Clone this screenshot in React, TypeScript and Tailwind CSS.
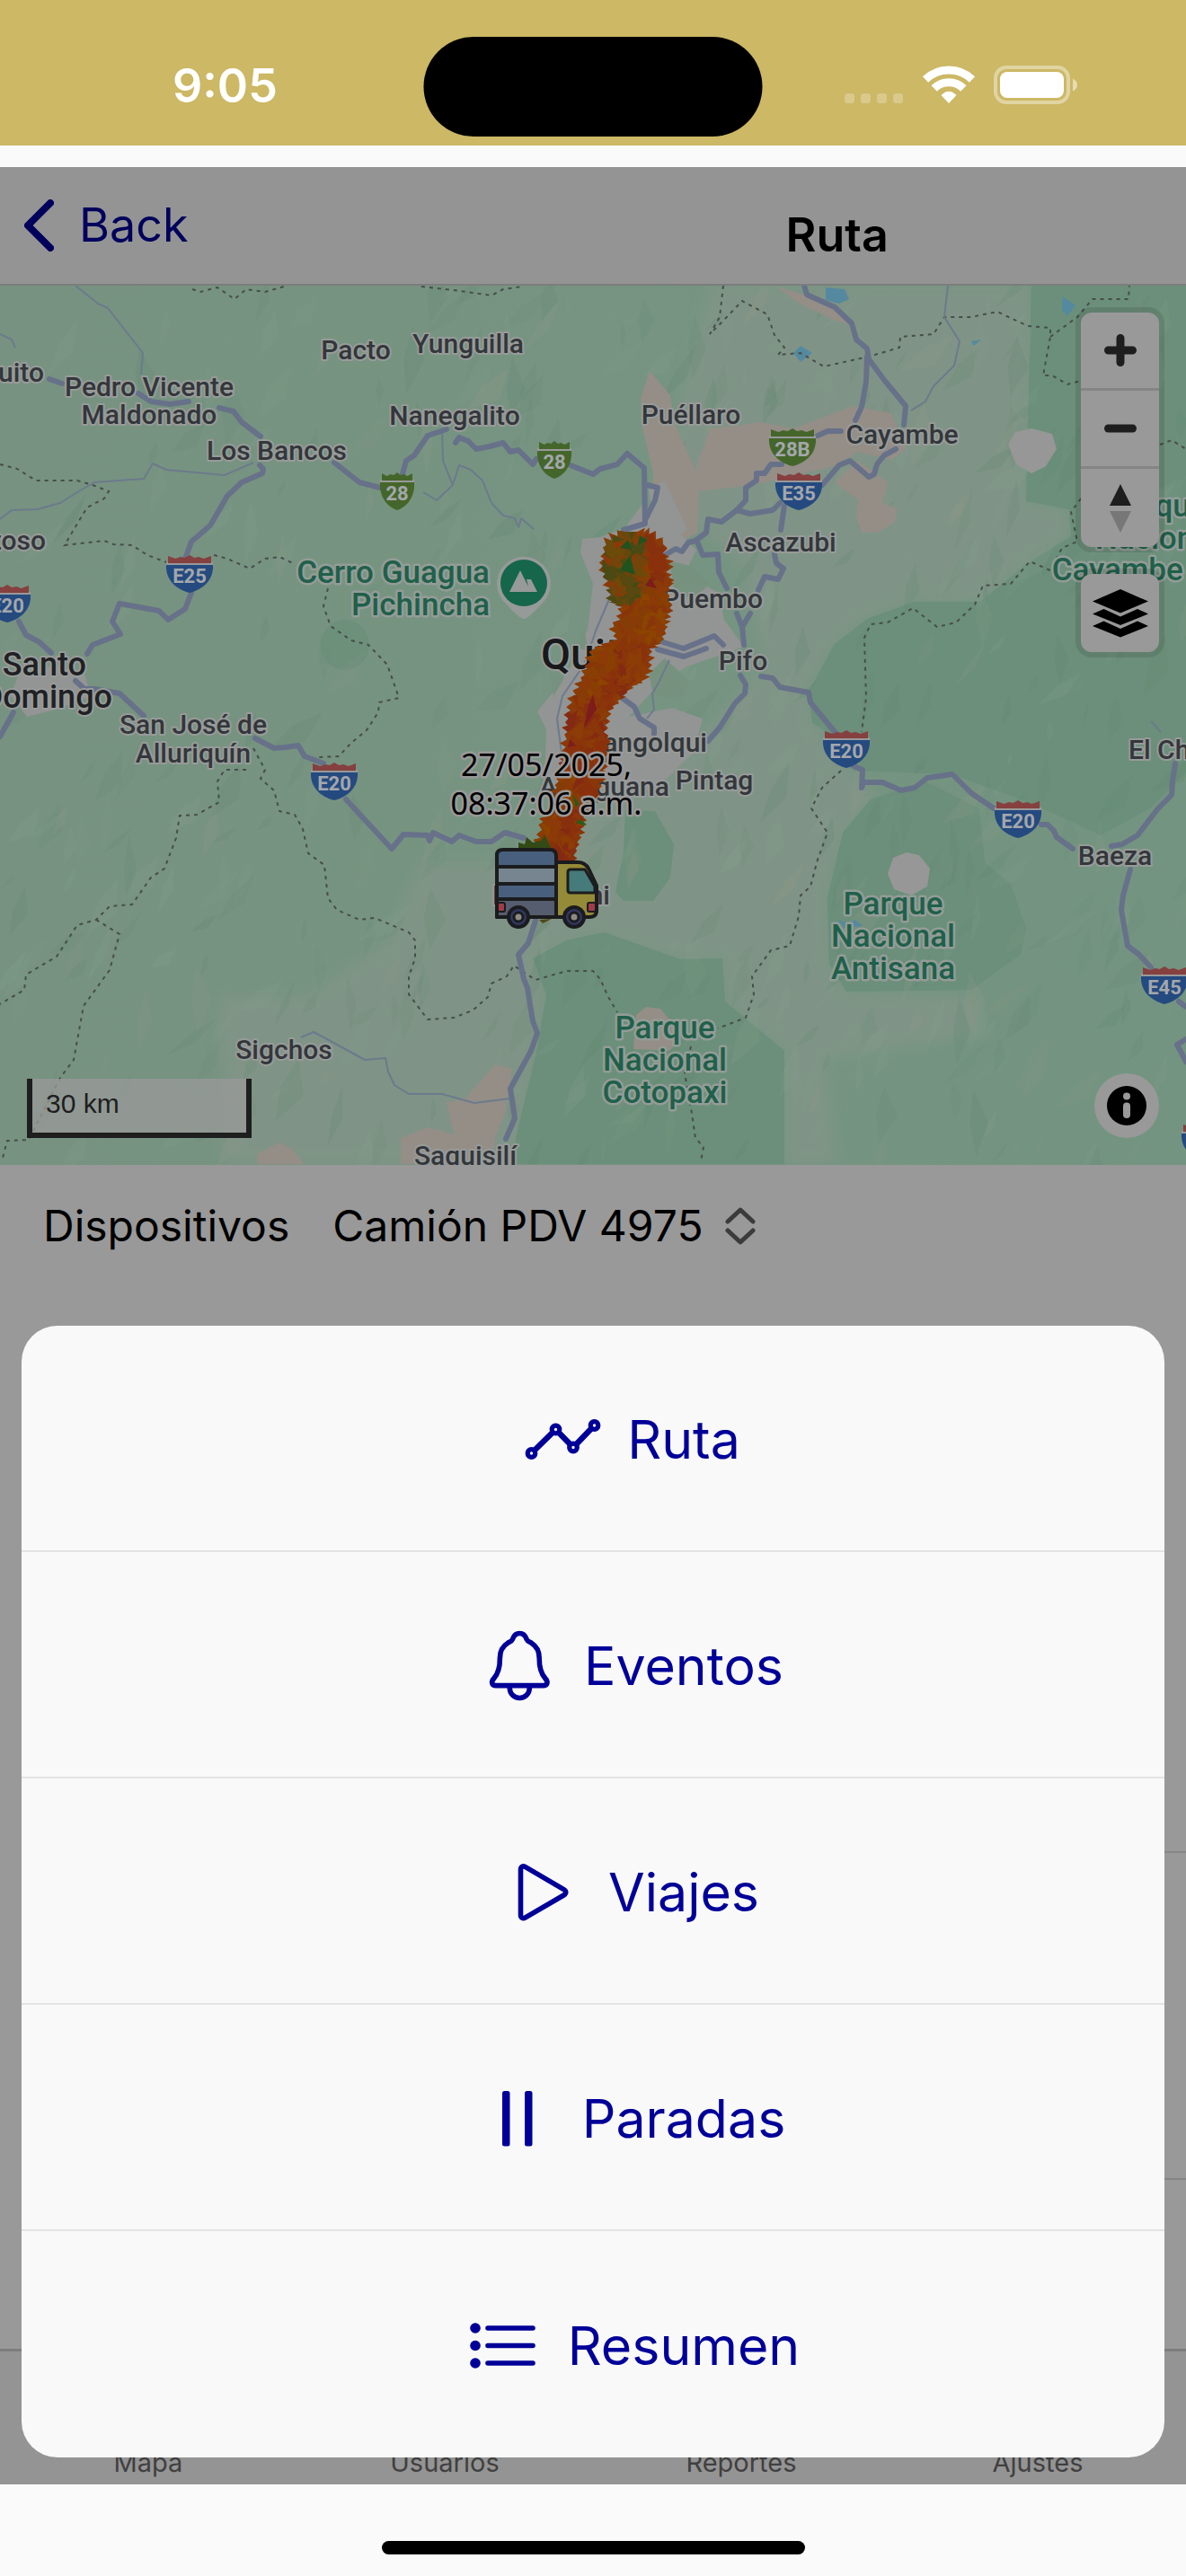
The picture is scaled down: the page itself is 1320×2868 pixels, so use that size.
import React from "react";

type Pt = [number, number];

/* Small deterministic generator, used for the relief facets and the jagged route. */
function makeRandom(seed: number) {
  let s = seed;
  return () => {
    s = (s * 1664525 + 1013904223) % 4294967296;
    return s / 4294967296;
  };
}

const MAJOR_ROADS = [
  "55,422 69,427",
  "154,438 168,447 189,450 210,447",
  "244,454 260,458 269,470 290,486",
  "372,515 400,537 423,543",
  "448,528 452,513 461,507 476,485 497,478",
  "507,493 511,487 521,491 530,500 545,497 560,493 568,503 577,501 593,517 597,511",
  "635,518 660,528 668,522 687,517 698,505 717,521 718,583 694,590",
  "721,540 732,543 729,557 719,577",
  "289,518 293,522 292,527 269,537 253,552 234,585 213,603 205,625",
  "213,660 206,678 187,690 177,680 133,672 125,692 134,706 103,718 97,728",
  "21,692 29,707 44,715 57,727",
  "84,758 94,767 105,767 133,772 160,797",
  "15,793 0,820",
  "284,822 305,833 318,832 332,830 339,842 350,846 360,850",
  "385,890 436,945 449,929 476,930 478,936 482,927 503,937 511,930 530,937 547,937 562,927 583,933",
  "596,1025 588,1050 577,1063 583,1090 587,1100 593,1137 598,1150 591,1170 568,1212 573,1245 563,1268",
  "895,318 898,328 929,342 948,360 953,378 965,388 967,400 984,423 1008,452 1006,473",
  "965,397 964,425 959,453 952,468",
  "910,485 921,480 936,480",
  "870,517 858,517 851,527 842,527 842,535 830,543 830,557 820,568 803,581 788,578 786,593 774,602 766,604 759,614 752,611 740,618",
  "820,568 835,572 860,568 868,560",
  "915,540 934,518 946,513 967,531 973,528 976,517 984,507 997,500",
  "873,563 869,590",
  "862,617 864,627 872,633 866,645 851,642 844,657",
  "776,603 782,618 799,617 800,637 809,655",
  "820,683 826,698 835,683",
  "826,698 828,718",
  "738,715 761,722 795,708 805,718",
  "732,723 761,731 786,722",
  "824,752 830,762 829,772 818,783 801,810 788,825",
  "847,753 860,755 868,765 900,771 902,782 925,810 931,817",
  "687,773 706,787 712,800 728,810 728,817",
  "950,853 960,857 959,877 961,871 982,871 1003,880 1018,877 1032,866 1060,862 1081,883 1106,900",
  "1159,918 1166,918 1173,925 1176,932 1194,945",
  "1237,942 1249,940 1266,930 1289,900 1304,885 1305,870 1308,850",
  "1258,968 1250,997 1248,1013 1255,1053 1268,1063 1281,1077",
  "1312,1115 1320,1121",
  "1320,1157 1310,1163 1320,1182",
];

const MINOR_ROADS = [
  "84,318 109,338 120,343 159,393 157,417",
  "0,372 13,378 17,387",
  "0,578 13,568 42,567 67,560 86,548 105,537 160,533 170,516 185,523 250,529 282,515",
  "492,480 493,513 504,540 486,557 471,548",
  "504,540 511,518 524,523 537,535 547,560 560,574 573,577 577,587 580,577 594,589",
  "1055,318 1051,353 1068,380 1062,407 1039,430 1030,447 1014,457",
  "335,1155 349,1149 364,1157 406,1180 429,1178 432,1193 439,1208 455,1218 492,1218 528,1228 568,1223",
  "681,660 664,700 650,740 626,775 620,800 625,838",
  "745,735 733,760 726,772 728,790 720,800",
  "1281,803 1292,815",
];

const BORDERS = [
  "214,322 223,325 242,320 261,333 274,322 295,325 316,319",
  "469,319 505,323 547,329 560,322 581,319",
  "0,517 19,522 40,535 86,535 103,540 121,547 116,555 97,565 86,583 76,600 72,607 116,602 126,606 147,607 164,618 185,626",
  "238,618 253,622 278,633 295,622 311,620 326,627",
  "365,655 360,675 368,697 391,713 410,718 431,740 444,777 422,782 421,793 408,813 391,827 377,842 354,843",
  "282,833 295,857 290,867 305,880 311,903 328,907 337,923 343,950 361,963 365,1000 375,1013 400,1024 417,1022 455,1038 462,1047 462,1067 455,1087 455,1107 476,1135 505,1133 526,1125 543,1110 547,1095 564,1087 572,1075 596,1091 631,1081 660,1081 668,1090 677,1110 687,1127",
  "274,857 250,857 242,870 244,893 219,907 200,908 196,933 183,967 168,977 147,1007 122,1009 107,1024 86,1030 63,1065 29,1085 27,1102 0,1118",
  "107,1024 133,1040 122,1080 93,1120 82,1180 67,1200 38,1257 32,1269 8,1270 2,1293",
  "805,318 801,353 790,372 805,357 826,335 854,350 862,373 873,387 866,395 891,393 917,408 967,397 1001,387 1002,375 1039,372 1051,353 1081,353 1110,347 1144,363 1169,365 1169,375 1161,418 1171,418 1188,428 1203,424",
  "1169,375 1199,353 1216,333 1256,333 1257,318",
  "1203,555 1192,570 1199,603 1182,610 1169,635 1146,625 1125,650 1094,652 1085,673 1064,693 1043,698 1016,677 988,693 969,695 962,710 964,777 959,815",
  "936,858 915,877 903,900 921,927 910,957 902,987 891,997 889,1020 879,1053 858,1058 837,1087 839,1107 830,1133 799,1145",
  "769,1165 762,1195 769,1233 774,1267 783,1277 780,1293",
  "1291,495 1304,490 1320,500",
];

const FORESTS = [
  "1148,318 1320,318 1320,860 1280,900 1225,930 1150,895 1060,862 950,858 929,820 904,805 900,770 929,717 967,688 1018,670 1091,670 1144,627 1192,597 1190,567 1142,558",
  "969,890 938,927 921,1000 923,1073 942,1104 1081,1102 1136,1063 1142,1033 1125,985 1096,960 1090,900 1030,870",
  "574,1296 574,1267 598,1167 608,1107 593,1067 630,1047 673,1038 757,1068 804,1067 807,1115 873,1170 873,1296",
  "696,902 729,903 750,940 746,977 727,1003 694,1003 685,993 694,947",
];

const LIGHT_LAND = [
  "790,318 1148,318 1142,558 1190,567 1192,597 1144,627 1091,670 1018,670 967,688 929,717 900,770 904,805 940,850 980,890 940,930 920,1000 923,1073 942,1104 1080,1110 1100,1150 920,1180 930,1296 873,1296 873,1170 807,1115 804,1067 757,1068 660,1040 600,1067 608,1107 574,1296 250,1296 245,1110 340,1110 430,1050 470,960 590,960 680,870 760,840 850,740 820,620 730,560 760,430",
];

const FARMLAND = [
  "723,413 746,440 750,470 774,523 790,477 828,473 845,470 883,477 950,452 992,460 1009,500 992,512 955,503 925,520 880,530 840,540 778,547 776,593 744,612 725,575 727,527 715,477 713,443",
  "929,537 955,513 988,537 982,560 999,567 995,582 976,593 959,593 953,575 955,557",
  "551,1185 570,1190 562,1240 551,1267 548,1296 509,1296 446,1296 446,1267 476,1255 505,1263 497,1227 518,1223",
  "311,1272 325,1279 339,1296 286,1296 286,1285",
  "862,318 900,330 940,350 948,362 930,357 890,338",
  "708,1130 719,1121 735,1123 745,1135 755,1160 745,1170 705,1168",
];

const URBAN = [
  "648,600 668,598 695,588 716,560 736,575 775,612 762,640 800,660 806,690 828,720 800,730 765,742 735,760 700,798 748,788 782,800 772,838 728,880 684,880 610,878 606,870 608,812 598,792 620,765 640,735 654,700 660,650 646,615",
  "20,752 60,740 95,752 100,775 62,790 30,798 12,775",
  "722,545 740,535 765,590 750,600 728,585",
];

const PATCHES = [
  "740,733 767,758 757,780 727,773 722,750",
  "745,625 770,630 790,650 770,668 750,655",
  "612,750 628,755 616,775",
  "640,720 650,700 655,725",
];

const SNOW = [
  "1148,477 1171,483 1176,500 1164,519 1148,527 1131,517 1122,495 1130,481",
  "1009,949 1023,952 1035,967 1032,987 1014,997 995,990 988,973 994,955",
];

const WATER = [
  "919,320 940,322 945,333 934,338 919,334",
  "891,385 904,393 891,403 883,393",
  "1182,330 1197,340 1188,352 1182,345",
  "1081,380 1092,378 1084,385",
  "932,1024 945,1028 952,1024 960,1031 940,1033",
];

type Label = { x: number; y: number; text: string; anchor?: "start" | "middle" | "end" };

const TOWNS: Label[] = [
  { x: 396, y: 400, text: "Pacto" },
  { x: 521, y: 393, text: "Yunguilla" },
  { x: 49, y: 425, text: "Quito", anchor: "end" },
  { x: 166, y: 441, text: "Pedro Vicente" },
  { x: 166, y: 472, text: "Maldonado" },
  { x: 308, y: 512, text: "Los Bancos" },
  { x: 506, y: 473, text: "Nanegalito" },
  { x: 51, y: 612, text: "Ventoso", anchor: "end" },
  { x: 215, y: 817, text: "San José de" },
  { x: 215, y: 849, text: "Alluriquín" },
  { x: 316, y: 1179, text: "Sigchos" },
  { x: 518, y: 1297, text: "Saquisilí" },
  { x: 769, y: 472, text: "Puéllaro" },
  { x: 1004, y: 494, text: "Cayambe" },
  { x: 869, y: 614, text: "Ascazubi" },
  { x: 849, y: 677, text: "Puembo", anchor: "end" },
  { x: 827, y: 746, text: "Pifo" },
  { x: 787, y: 837, text: "Sangolqui", anchor: "end" },
  { x: 795, y: 879, text: "Pintag" },
  { x: 745, y: 886, text: "Amaguana", anchor: "end" },
  { x: 679, y: 1007, text: "Machachi", anchor: "end" },
  { x: 1256, y: 845, text: "El Chaco", anchor: "start" },
  { x: 1241, y: 963, text: "Baeza" },
];

const PARKS: Label[] = [
  { x: 545, y: 649, text: "Cerro Guagua", anchor: "end" },
  { x: 545, y: 685, text: "Pichincha", anchor: "end" },
  { x: 994, y: 1018, text: "Parque" },
  { x: 994, y: 1054, text: "Nacional" },
  { x: 994, y: 1090, text: "Antisana" },
  { x: 740, y: 1156, text: "Parque" },
  { x: 740, y: 1192, text: "Nacional" },
  { x: 740, y: 1228, text: "Cotopaxi" },
  { x: 1288, y: 575, text: "Parque" },
  { x: 1288, y: 611, text: "Nacional" },
  { x: 1288, y: 646, text: "Cayambe Coca" },
];

const SHIELDS: { x: number; y: number; text: string; kind: "green" | "blue" }[] = [
  { x: 442, y: 547, text: "28", kind: "green" },
  { x: 617, y: 512, text: "28", kind: "green" },
  { x: 882, y: 498, text: "28B", kind: "green" },
  { x: 211, y: 639, text: "E25", kind: "blue" },
  { x: 8, y: 672, text: "E20", kind: "blue" },
  { x: 889, y: 547, text: "E35", kind: "blue" },
  { x: 372, y: 870, text: "E20", kind: "blue" },
  { x: 942, y: 834, text: "E20", kind: "blue" },
  { x: 1133, y: 912, text: "E20", kind: "blue" },
  { x: 1296, y: 1097, text: "E45", kind: "blue" },
  { x: 1341, y: 1272, text: "", kind: "blue" },
];

const LEFT_EDGE: Pt[] = [
  [694, 592], [675, 607], [671, 630], [680, 655], [682, 670], [694, 676], [691, 690], [684, 698],
  [688, 712], [662, 722], [654, 745], [645, 765], [637, 782], [633, 800], [632, 815], [629, 840],
  [622, 870], [615, 900], [605, 915], [602, 933], [590, 960],
];
const RIGHT_EDGE: Pt[] = [
  [710, 592], [722, 595], [738, 606], [737, 616], [744, 628], [741, 637], [747, 648], [741, 660],
  [745, 677], [739, 690], [739, 702], [734, 715], [722, 722], [721, 745], [714, 758], [703, 764],
  [687, 780], [676, 792], [671, 815], [676, 822], [672, 850], [665, 880], [662, 890], [648, 910],
  [644, 930], [636, 960],
];

/* Adds saw teeth along an edge, pointing in the given direction. */
function teeth(edge: Pt[], side: number, rnd: () => number): Pt[] {
  const out: Pt[] = [];
  for (let i = 0; i < edge.length - 1; i++) {
    const [ax, ay] = edge[i];
    const [bx, by] = edge[i + 1];
    const n = Math.max(1, Math.round(Math.hypot(bx - ax, by - ay) / 8));
    for (let k = 0; k < n; k++) {
      const t = k / n;
      const u = (k + 0.5) / n;
      const lift = by < 612 ? 7 : 2;
      out.push([ax + (bx - ax) * t, ay + (by - ay) * t]);
      out.push([ax + (bx - ax) * u + side * (3 + rnd() * 5), ay + (by - ay) * u - lift + rnd() * 3]);
    }
  }
  out.push(edge[edge.length - 1]);
  return out;
}

function edgeX(edge: Pt[], y: number) {
  for (let i = 0; i < edge.length - 1; i++) {
    const [ax, ay] = edge[i];
    const [bx, by] = edge[i + 1];
    if (y >= ay && y <= by && by > ay) return ax + ((bx - ax) * (y - ay)) / (by - ay);
  }
  return edge[edge.length - 1][0];
}

const toPoints = (pts: Pt[]) => pts.map((p) => `${p[0].toFixed(1)},${p[1].toFixed(1)}`).join(" ");

const routeRandom = makeRandom(41);
const ROUTE_OUTLINE = toPoints([
  ...teeth(LEFT_EDGE, -1, routeRandom),
  ...teeth(RIGHT_EDGE, 1, routeRandom).reverse(),
]);

const GREENS = ["#57490f", "#4c4a14", "#65480d", "#74450a", "#404d15", "#6b4a0a"];
const ORANGES = ["#8a3f02", "#853c06", "#8b3a08", "#88350b", "#8c4400"];
const REDS = ["#8a310c", "#87300d", "#8a360a", "#852a12", "#8c3c06"];

const ROUTE_FACETS = Array.from({ length: 430 }, () => {
  const y = 588 + routeRandom() * 370;
  const l = edgeX(LEFT_EDGE, Math.max(y, 593));
  const r = edgeX(RIGHT_EDGE, Math.max(y, 593));
  const f = routeRandom();
  const x = l + (r - l) * f;
  const size = 6 + routeRandom() * 9;
  const a = routeRandom() * 6.28;
  let palette = ORANGES;
  if (y < 672 && f < 0.62) palette = GREENS;
  else if (y < 650) palette = f > 0.7 ? REDS : ORANGES;
  else if (y > 770 && y < 860) palette = REDS;
  else if (y > 720 && f > 0.4) palette = REDS;
  const fill = palette[Math.floor(routeRandom() * palette.length)];
  const pts: Pt[] = [0, 2.3, 3.6].map((d) => [x + Math.cos(a + d) * size, y + Math.sin(a + d) * size]);
  return { fill, points: toPoints(pts) };
});

const reliefRandom = makeRandom(7);
const RELIEF = Array.from({ length: 620 }, () => {
  const x = reliefRandom() * 1320;
  const y = 318 + reliefRandom() * 978;
  const keep = x > 850 || y > 850 || x > 480 || reliefRandom() > 0.75;
  const size = keep ? 12 + reliefRandom() * 26 : 0;
  const a = -1.1 + (reliefRandom() - 0.5) * 1.1;
  const w = size * (0.2 + reliefRandom() * 0.35);
  const c = Math.cos(a);
  const s = Math.sin(a);
  const pts: Pt[] = [
    [x + c * size, y + s * size],
    [x - s * w, y + c * w],
    [x - c * size, y - s * size],
    [x + s * w * 0.4, y - c * w * 0.4],
  ];
  const tone = reliefRandom();
  return {
    points: toPoints(pts),
    fill: tone < 0.5 ? "#5f8570" : tone < 0.85 ? "#86a08e" : "#93998a",
    opacity: 0.1 + reliefRandom() * 0.14,
  };
});

function Shield({ x, y, text, kind }: (typeof SHIELDS)[number]) {
  const w = kind === "blue" || text.length > 2 ? 26 : 19;
  const body = `M${-w},-10 H${w} C${w + 1},6 ${w * 0.6},17 0,21 C${-w * 0.6},17 ${-w - 1},6 ${-w},-10Z`;
  const crown = `M${-w + 2},-12 V-20 L${-w * 0.6},-17 L${-w * 0.4},-19 L${-w * 0.2},-18 L0,-21 L${w * 0.2},-18 L${w * 0.4},-19 L${w * 0.6},-17 L${w - 2},-20 V-12Z`;
  return (
    <g transform={`translate(${x} ${y})`}>
      <path d={`M${-w},-13 H${w} V-9 H${-w}Z`} fill="#999999" />
      <path d={body} fill={kind === "blue" ? "#244a80" : "#45662a"} />
      <path d={crown} fill={kind === "blue" ? "#85403f" : "#45662a"} />
      {text && (
        <text y="10" textAnchor="middle" fontSize="22" fontWeight="700" fill="#a3a7ab">
          {text}
        </text>
      )}
    </g>
  );
}

function Truck() {
  return (
    <g stroke="#1b1c1e" strokeWidth="4" strokeLinejoin="round">
      <path d="M553,1021 V952 Q553,946 560,946 H612 Q619,946 619,953 V1021Z" fill="#48607d" />
      <path d="M553,965 H619 V984 H553Z" fill="#768590" />
      <path d="M553,984 H619 V1001 H553Z" fill="#48607d" />
      <path d="M553,1001 H619 V1021 H553Z" fill="#565d6e" />
      <path d="M619,960 H643 Q651,960 655,967 L664,986 V1014 Q664,1021 656,1021 H619Z" fill="#958a37" />
      <path d="M632,971 Q632,968 635,968 H651 L662,987 V994 H635 Q632,994 632,991Z" fill="#467b7b" strokeWidth="3" />
      <rect x="554" y="1005" width="8" height="10" rx="2" fill="#a03c4a" strokeWidth="2" />
      <rect x="654" y="1005" width="9" height="10" rx="2" fill="#a03c4a" strokeWidth="2" />
      <circle cx="577" cy="1021" r="11" fill="#333763" />
      <circle cx="577" cy="1021" r="5" fill="#8d8a82" strokeWidth="3" />
      <circle cx="639" cy="1021" r="11" fill="#333763" />
      <circle cx="639" cy="1021" r="5" fill="#8d8a82" strokeWidth="3" />
    </g>
  );
}

function MapDrawing() {
  return (
    <svg
      className="block h-[979px] w-full font-[Roboto,sans-serif]"
      viewBox="0 318 1320 979"
      preserveAspectRatio="xMidYMid slice"
      role="img"
      aria-label="Mapa de la ruta"
    >
      <defs>
        <linearGradient id="land" x1="0" x2="1" y1="0" y2="0">
          <stop offset="0" stopColor="#779280" />
          <stop offset="0.5" stopColor="#769481" />
          <stop offset="1" stopColor="#739480" />
        </linearGradient>
        <filter id="soft" x="-5%" y="-5%" width="110%" height="110%">
          <feGaussianBlur stdDeviation="7" />
        </filter>
        <clipPath id="route">
          <polygon points={ROUTE_OUTLINE} />
        </clipPath>
      </defs>
      <rect y="318" width="1320" height="979" fill="url(#land)" />
      <g fill="#7f9486" filter="url(#soft)">
        {LIGHT_LAND.map((p) => <polygon key={p} points={p} />)}
      </g>
      <g fill="#6b8f7a">
        {FORESTS.map((p) => <polygon key={p} points={p} />)}
        <ellipse cx="384" cy="718" rx="27" ry="28" fill="#6d907b" />
      </g>
      <g>
        {RELIEF.map((r, i) => <polygon key={i} points={r.points} fill={r.fill} opacity={r.opacity} />)}
      </g>
      <g fill="#948e87">
        {FARMLAND.map((p) => <polygon key={p} points={p} />)}
      </g>
      <g fill="#939494">
        {URBAN.map((p) => <polygon key={p} points={p} />)}
      </g>
      <g fill="#77917f">
        {PATCHES.map((p) => <polygon key={p} points={p} />)}
      </g>
      <g fill="#979797">
        {SNOW.map((p) => <polygon key={p} points={p} />)}
      </g>
      <g fill="#5489a0">
        {WATER.map((p) => <polygon key={p} points={p} />)}
      </g>
      <g fill="none" stroke="#474e4b" strokeWidth="2" strokeDasharray="4 5">
        {BORDERS.map((p) => <polyline key={p} points={p} />)}
      </g>
      <g fill="none" stroke="#6c7a8c" strokeWidth="2" strokeLinejoin="round">
        {MINOR_ROADS.map((p) => <polyline key={p} points={p} />)}
      </g>
      <g fill="none" stroke="#677189" strokeWidth="6" strokeLinejoin="round" strokeLinecap="round">
        {MAJOR_ROADS.map((p) => <polyline key={p} points={p} />)}
      </g>
      <g>
        {SHIELDS.map((s, i) => <Shield key={i} {...s} />)}
      </g>
      <g fontSize="30" fontWeight="500" fill="#33373a" stroke="#989b9a" strokeWidth="4" strokeLinejoin="round" style={{ paintOrder: "stroke" }}>
        {TOWNS.map((t) => (
          <text key={t.text + t.x} x={t.x} y={t.y} textAnchor={t.anchor ?? "middle"}>
            {t.text}
          </text>
        ))}
        <text x="96" y="752" textAnchor="end" fontSize="36" fill="#1f2123">Santo</text>
        <text x="125" y="788" textAnchor="end" fontSize="36" fill="#1f2123">Domingo</text>
        <text x="602" y="745" fontSize="48" fill="#18191b">Quito</text>
      </g>
      <g fontSize="35" fontWeight="500" fill="#1f604a" stroke="#939c97" strokeWidth="5" strokeLinejoin="round" style={{ paintOrder: "stroke" }}>
        {PARKS.map((t, i) => (
          <text key={i} x={t.x} y={t.y} textAnchor={t.anchor ?? "middle"}>
            {t.text}
          </text>
        ))}
      </g>
      <path d="M583,689 Q578,689 564,673 A30,30 0 1 1 602,673 Q588,689 583,689Z" fill="#969a98" />
      <circle cx="583" cy="649" r="26" fill="#15664a" />
      <path d="M567,659 L579,635 L586,649 L588,653 L586,645 L591,645 L598,659Z" fill="#969a98" />
      <polygon points={ROUTE_OUTLINE} fill="#8a3a08" />
      <g clipPath="url(#route)">
        {ROUTE_FACETS.map((f, i) => <polygon key={i} points={f.points} fill={f.fill} />)}
        <path d="M701,619 L707,640 L690,634Z M690,610 L699,601 L703,612Z M712,596 L720,602 L710,606Z" fill="#1f531f" />
        <path d="M660,773 L664,790 L650,810 L655,785Z M724,643 L731,655 L718,652Z M634,823 L641,830 L632,832Z" fill="#7d1c1c" />
      </g>
      <path d="M577,938 L584,940 L586,932 L593,938 L602,936 L606,930 L614,945 L610,950 H577Z" fill="#334a16" />
      <path d="M645,912 L653,918 L650,919 L641,916Z M637,884 L645,895 L641,899Z" fill="#2a5a1a" />
      <path d="M600,1024 L604,1028 L614,1023Z" fill="#4f4a12" />
      <Truck />
      <g
        className="font-['Noto_Sans','Open_Sans',sans-serif]"
        fontSize="34"
        textAnchor="middle"
        fill="#000000"
        stroke="#999999"
        strokeWidth="5"
        strokeLinejoin="round"
        style={{ paintOrder: "stroke" }}
      >
        <text x="608" y="864">27/05/2025,</text>
        <text x="608" y="907">08:37:06 a.m.</text>
      </g>
    </svg>
  );
}

function MapControls() {
  const cell = "flex h-[87px] w-[87px] items-center justify-center";
  return (
    <div className="absolute top-[30px] right-[30px] flex flex-col gap-[30px]">
      <div className="divide-y-3 divide-[#858585] overflow-hidden rounded-xl bg-[#999] outline-6 outline-black/10">
        <button className={cell} aria-label="Acercar">
          <svg width="36" height="36" viewBox="0 0 36 36" stroke="#1e1e1e" strokeWidth="9" strokeLinecap="round">
            <path d="M4.5 18H31.5M18 4.5V31.5" />
          </svg>
        </button>
        <button className={cell} aria-label="Alejar">
          <svg width="36" height="36" viewBox="0 0 36 36" stroke="#1e1e1e" strokeWidth="9" strokeLinecap="round">
            <path d="M4.5 18H31.5" />
          </svg>
        </button>
        <button className={cell} aria-label="Orientar al norte">
          <svg width="24" height="54" viewBox="0 0 24 54">
            <path d="M12 0L24 24H0Z" fill="#1e1e1e" />
            <path d="M12 54L24 30H0Z" fill="#777777" />
          </svg>
        </button>
      </div>
      <button className={`${cell} rounded-xl bg-[#999] outline-6 outline-black/10`} aria-label="Capas">
        <svg width="62" height="54" viewBox="0 0 62 54">
          <path d="M31 0L62 13.5L31 26.5L0 13.5Z" />
          <path d="M12.5 22L31 30.5L50 22L62 27.5L31 40L0 27.5Z" />
          <path d="M12.5 35.5L31 44L50 35.5L62 41L31 53.5L0 41Z" />
        </svg>
      </button>
    </div>
  );
}

function StatusBar() {
  return (
    <header className="relative flex h-[162px] items-center justify-between bg-[#ccb865] pr-[120px] pl-[192px] text-white">
      <span className="pt-[30px] text-[52px] leading-[60px] font-semibold">9:05</span>
      <div className="absolute top-[41px] left-1/2 h-[111px] w-[377px] -translate-x-1/2 rounded-full bg-black" />
      <div className="flex items-center pt-[27px]">
        <svg width="66" height="43" viewBox="0 0 66 43" fill="#ffffff" fillOpacity="0.25">
          <rect x="0" y="31" width="11" height="11" rx="3" />
          <rect x="18" y="31" width="11" height="11" rx="3" />
          <rect x="36" y="31" width="11" height="11" rx="3" />
          <rect x="54" y="31" width="11" height="11" rx="3" />
        </svg>
        <svg className="ml-5" width="60" height="43" viewBox="0 0 60 43" fill="none" stroke="#ffffff" strokeWidth="9">
          <path d="M4 15.5A37.5 37.5 0 0 1 56 15.5" />
          <path d="M13.7 25.5A23 23 0 0 1 46.3 25.5" />
          <path d="M30 42L21.5 33Q30 24.5 38.5 33Z" fill="#ffffff" stroke="none" />
        </svg>
        <svg className="ml-5" width="94" height="43" viewBox="0 0 94 43">
          <rect x="2" y="2" width="81" height="39" rx="12" fill="none" stroke="#ffffff" strokeOpacity="0.4" strokeWidth="4" />
          <rect x="7" y="7" width="71" height="29" rx="8" fill="#ffffff" />
          <path d="M88 14.5Q93 17 93 21.5Q93 26 88 28.5Z" fill="#ffffff" fillOpacity="0.5" />
        </svg>
      </div>
    </header>
  );
}

const ink = { fill: "none", stroke: "currentColor", strokeWidth: 5.6, strokeLinecap: "round" as const, strokeLinejoin: "round" as const };

const ACTIONS: { label: string; icon: React.ReactNode }[] = [
  {
    label: "Ruta",
    icon: (
      <g {...ink}>
        <path d="M7.5 57L34.5 30.5L54 50.5L77.5 26" strokeWidth="6.5" />
        <g fill="#f9f9f9" strokeWidth="5.2">
          <circle cx="7.5" cy="57" r="4.3" />
          <circle cx="34.5" cy="30.5" r="4.3" />
          <circle cx="54" cy="50.5" r="4.3" />
          <circle cx="77.5" cy="26" r="4.3" />
        </g>
      </g>
    ),
  },
  {
    label: "Eventos",
    icon: (
      <g {...ink}>
        <path d="M42.3 5.5C37.5 5.5 35.5 9 34.5 12C33.5 14.5 31.5 14.8 29 16.3C23 20 20.4 26 20.4 33C20.5 44 18.5 50.5 13.5 56C10.5 59.3 11 63.6 16 63.6H68.6C73.6 63.6 74.1 59.3 71.1 56C66.1 50.5 64.1 44 64.2 33C64.2 26 61.6 20 55.6 16.3C53.1 14.8 51.1 14.5 50.1 12C49.1 9 47.1 5.5 42.3 5.5Z" />
        <path d="M31.3 64V66.5A11 11 0 0 0 53.3 66.5V64" />
      </g>
    ),
  },
  {
    label: "Viajes",
    icon: (
      <path
        {...ink}
        d="M16.5 16.5V67C16.5 70.4 19 71.5 21.8 69.8L64.5 45C67.5 43.2 67.5 40.4 64.5 38.6L21.8 13.7C19 12 16.5 13 16.5 16.5Z"
      />
    ),
  },
  {
    label: "Paradas",
    icon: (
      <g fill="currentColor">
        <rect x="25" y="11" width="8.5" height="61.5" rx="2.5" />
        <rect x="50" y="11" width="8.5" height="61.5" rx="2.5" />
      </g>
    ),
  },
  {
    label: "Resumen",
    icon: (
      <g {...ink}>
        <path d="M25 22H75M25 41.5H75M25 61H75" />
        <g fill="currentColor" stroke="none">
          <circle cx="11" cy="22" r="5.8" />
          <circle cx="11" cy="41.5" r="5.8" />
          <circle cx="11" cy="61" r="5.8" />
        </g>
      </g>
    ),
  },
];

const TABS = ["Mapa", "Usuarios", "Reportes", "Ajustes"];

export default function App() {
  return (
    <div className="flex min-h-screen flex-col bg-[#fafafa] font-[Inter,sans-serif] text-black">
      <StatusBar />
      <div className="relative mt-6 flex flex-1 flex-col bg-[#999]">
        <nav className="flex h-[132px] items-center border-b-2 border-[#7d7d7d] bg-[#949494] pl-[27px]">
          <a href="#back" className="flex items-center gap-7 text-[52px] leading-[64px] text-[#00005c]">
            <svg width="33" height="58" viewBox="0 0 33 58" fill="none" stroke="currentColor" strokeWidth="8" strokeLinecap="round" strokeLinejoin="round">
              <path d="M29 4L4 29L29 54" />
            </svg>
            Back
          </a>
          <h1 className="mt-[22px] mr-[25%] ml-auto pr-2 text-[52px] leading-[64px] font-semibold">Ruta</h1>
        </nav>

        <section className="relative">
          <MapDrawing />
          <MapControls />
          <div className="absolute bottom-[30px] left-[30px] h-[66px] w-[250px] border-6 border-t-0 border-[#1e1e1e] bg-[#999]/75 pt-2 pl-[15px] font-['Liberation_Sans',sans-serif] text-[30px] leading-[40px] text-[#1e1e1e]">
            30 km
          </div>
          <button
            className="absolute right-[30px] bottom-[30px] flex size-[72px] items-center justify-center rounded-full bg-[#999]"
            aria-label="Información"
          >
            <svg width="44" height="44" viewBox="0 0 44 44">
              <circle cx="22" cy="22" r="22" />
              <g stroke="#999999" strokeWidth="8" strokeLinecap="round">
                <path d="M22 22.5V32" />
                <path d="M22 11.5V11.6" />
              </g>
            </svg>
          </button>
        </section>

        <section className="ml-12 h-[766px] border-b-2 border-[#858585]">
          <div className="flex h-[136px] items-center text-[48px] leading-[64px]">
            <label htmlFor="device">Dispositivos</label>
            <select id="device" className="ml-12 appearance-none bg-transparent">
              <option>Camión PDV 4975</option>
            </select>
            <svg className="ml-6" width="34" height="42" viewBox="0 0 34 42" fill="none" stroke="#3b3b3b" strokeWidth="5" strokeLinecap="round" strokeLinejoin="round">
              <path d="M3 16L17 3L31 16M3 26L17 39L31 26" />
            </svg>
          </div>
        </section>
        <section className="ml-12 h-[364px] border-b-2 border-[#858585]" />

        <nav className="mt-auto grid h-[151px] grid-cols-4 items-end border-t-3 border-[#7d7d7d] bg-[#949494] pb-[6px] text-center text-[29px] leading-[36px] text-[#404040]">
          {TABS.map((tab) => (
            <a key={tab} href={`#${tab.toLowerCase()}`}>
              {tab}
            </a>
          ))}
        </nav>

        <div className="absolute inset-x-6 bottom-[30px] divide-y-2 divide-[#e4e4e4] overflow-hidden rounded-[40px] bg-[#f9f9f9] text-[#000099]" role="menu">
          {ACTIONS.map(({ label, icon }) => (
            <button
              key={label}
              role="menuitem"
              className="flex h-[252px] w-full items-center justify-center gap-[30px] pt-1 pl-[88px] text-[59px] leading-[76px]"
            >
              <svg width="84" height="84" viewBox="0 0 84 84" overflow="visible">
                {icon}
              </svg>
              {label}
            </button>
          ))}
        </div>
      </div>
      <footer className="flex h-[102px] items-end justify-center pb-6">
        <div className="h-[15px] w-[471px] rounded-full bg-black" />
      </footer>
    </div>
  );
}
